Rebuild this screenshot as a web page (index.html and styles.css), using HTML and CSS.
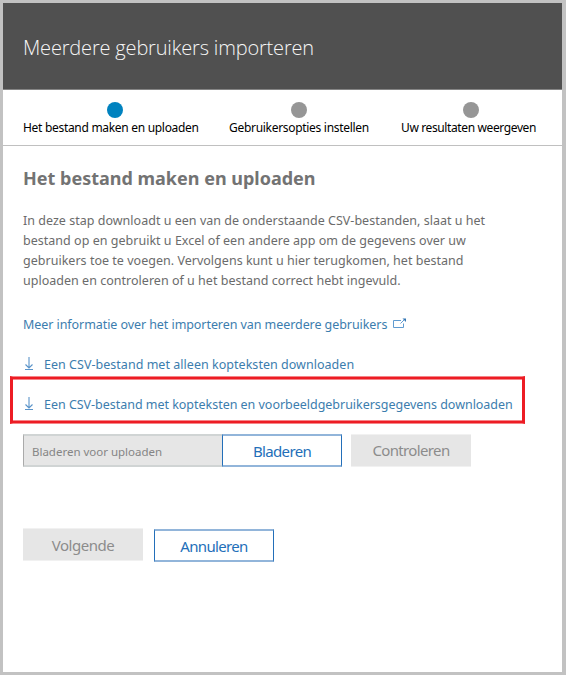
FILE: index.html
```html
<!DOCTYPE html>
<html lang="nl">
<head>
<meta charset="utf-8">
<title>Meerdere gebruikers importeren</title>
<link rel="stylesheet" href="styles.css">
</head>
<body>
<div class="dialog">
  <header class="header"><h1 class="title">Meerdere gebruikers importeren</h1></header>
  <ol class="steps">
    <li class="step step-create active"><i class="dot"></i><span class="step-label">Het bestand maken en uploaden</span></li>
    <li class="step step-options"><i class="dot"></i><span class="step-label">Gebruikersopties instellen</span></li>
    <li class="step step-results"><i class="dot"></i><span class="step-label">Uw resultaten weergeven</span></li>
  </ol>
  <main class="content">
    <h2 class="heading">Het bestand maken en uploaden</h2>
    <p class="intro">In deze stap downloadt u een van de onderstaande CSV-bestanden, slaat u het<br>bestand op en gebruikt u Excel of een andere app om de gegevens over uw<br>gebruikers toe te voegen. Vervolgens kunt u hier terugkomen, het bestand<br>uploaden en controleren of u het bestand correct hebt ingevuld.</p>
    <a class="link more"><span>Meer informatie over het importeren van meerdere gebruikers</span><svg class="external" width="14" height="12" viewBox="0 0 14 12"><path d="M8 2.500H.5v7h10V5.500M7.500 5.500l4-4"/><path class="tip" d="M9.500 .5h3.500v3.500z"/></svg></a>
    <a class="link download"><svg class="arrow" width="10" height="14" viewBox="0 0 10 14"><path d="M5 0v11M1.500 7.500L5 11l3.500-3.500M1 12.500h8"/></svg><span>Een CSV-bestand met alleen kopteksten downloaden</span></a>
    <div class="highlight"><a class="link download sample"><svg class="arrow" width="10" height="14" viewBox="0 0 10 14"><path d="M5 0v11M1.500 7.500L5 11l3.500-3.500M1 12.500h8"/></svg><span>Een CSV-bestand met kopteksten en voorbeeldgebruikersgegevens downloaden</span></a></div>
    <div class="upload">
      <div class="file">Bladeren voor uploaden</div>
      <button class="button outline browse">Bladeren</button>
      <button class="button muted verify">Controleren</button>
    </div>
    <div class="actions">
      <button class="button muted next">Volgende</button>
      <button class="button outline cancel">Annuleren</button>
    </div>
  </main>
</div>
</body>
</html>
```
FILE: styles.css
```css
* { box-sizing: border-box; }
body { margin: 0; font-family: "Noto Sans", "Open Sans", sans-serif; font-size: 12.5px; }
.dialog { width: 566px; height: 675px; border: 3px solid #c2c2c2; border-right-width: 4px; background: #fff; overflow: hidden; }
.header { height: 87px; padding-left: 20px; background: #505050; border-bottom: 1px solid #858585; display: flex; align-items: center; }
.title { margin: 4px 0 0; color: #f6f6f6; font: 350 20px/28px "Open Sans", sans-serif; letter-spacing: -0.17px; white-space: nowrap; }
.steps { height: 56px; margin: 0; padding: 12px 0 0 20px; list-style: none; display: flex; border-bottom: 1px solid #c0c0c0; }
.step { display: flex; flex-direction: column; align-items: center; color: #000; font-size: 12px; letter-spacing: -0.3px; white-space: nowrap; }
.step-create { width: 176px; margin-right: 30px; }
.step-options { width: 139px; margin-right: 33px; }
.step-results { width: 136px; letter-spacing: -0.38px; }
.dot { width: 16px; height: 16px; border-radius: 50%; background: #969696; }
.active .dot { background: #0082bf; margin-left: 8px; }
.step-results .dot { margin-left: 4px; }
.step-label { align-self: flex-start; line-height: 18px; margin-top: 1px; }
.content { padding: 19px 20px 0; }
.heading { margin: 0 0 20px; height: 26px; font: 700 18px/26px "Noto Sans", sans-serif; color: #737373; white-space: nowrap; }
.intro { margin: 0; line-height: 20px; letter-spacing: 0.02px; color: #6b6b6b; white-space: nowrap; }
.link { display: flex; align-items: center; height: 20px; color: #3c7dae; white-space: nowrap; }
.more { margin-top: 23px; letter-spacing: -0.07px; }
.external { margin-left: 6px; margin-bottom: 1px; fill: none; stroke: #609bd0; }
.external .tip { fill: #3476b4; stroke: none; }
.arrow { margin: 0 10px 1px 1px; fill: none; stroke: #5b94c9; stroke-width: 1.1; }
.download { margin-top: 20px; letter-spacing: 0.03px; }
/* Red marker with softened top and bottom edges */
.highlight { width: 515px; height: 48px; margin: 2px 0 0 -13px; border: 3px solid #ed1c24; border-width: 1px 3px; border-top-color: #f58588; border-bottom-color: #f58588; box-shadow: inset 0 2px #ed1c24, inset 0 -2px #ed1c24, inset 0 3px #f58588, inset 0 -3px #f58588; padding: 17px 0 0 10px; }
.sample { margin: 0; letter-spacing: -0.025px; }
.upload { display: flex; margin-top: 10px; }
.file { width: 199px; height: 33px; padding-left: 8px; line-height: 31px; font-size: 11.5px; letter-spacing: -0.01px; background: #e6e6e6; border: 1px solid #aaa; border-width: 2px 0 2px 1px; border-top-color: #d0d4d4; border-bottom-color: #d0d4d4; color: #858585; }
.button { width: 120px; height: 33px; padding: 0; border: 0; font: 15px/29px "Noto Sans", sans-serif; letter-spacing: -0.65px; }
.outline { padding-top: 1px; background: #fff; color: #236fb9; border: 1px solid #236fb9; border-width: 2px 1px; border-top-color: #92b5da; border-bottom-color: #92b5da; }
.muted { background: #e6e6e6; color: #8c8c8c; border: 0 solid #f1f1f1; border-width: 1px 0; }
.verify { margin-left: 9px; }
.actions { display: flex; gap: 11px; margin-top: 61px; }
.next { letter-spacing: -0.5px; padding-top: 1px; }
.cancel { margin-top: 1px; }
```
